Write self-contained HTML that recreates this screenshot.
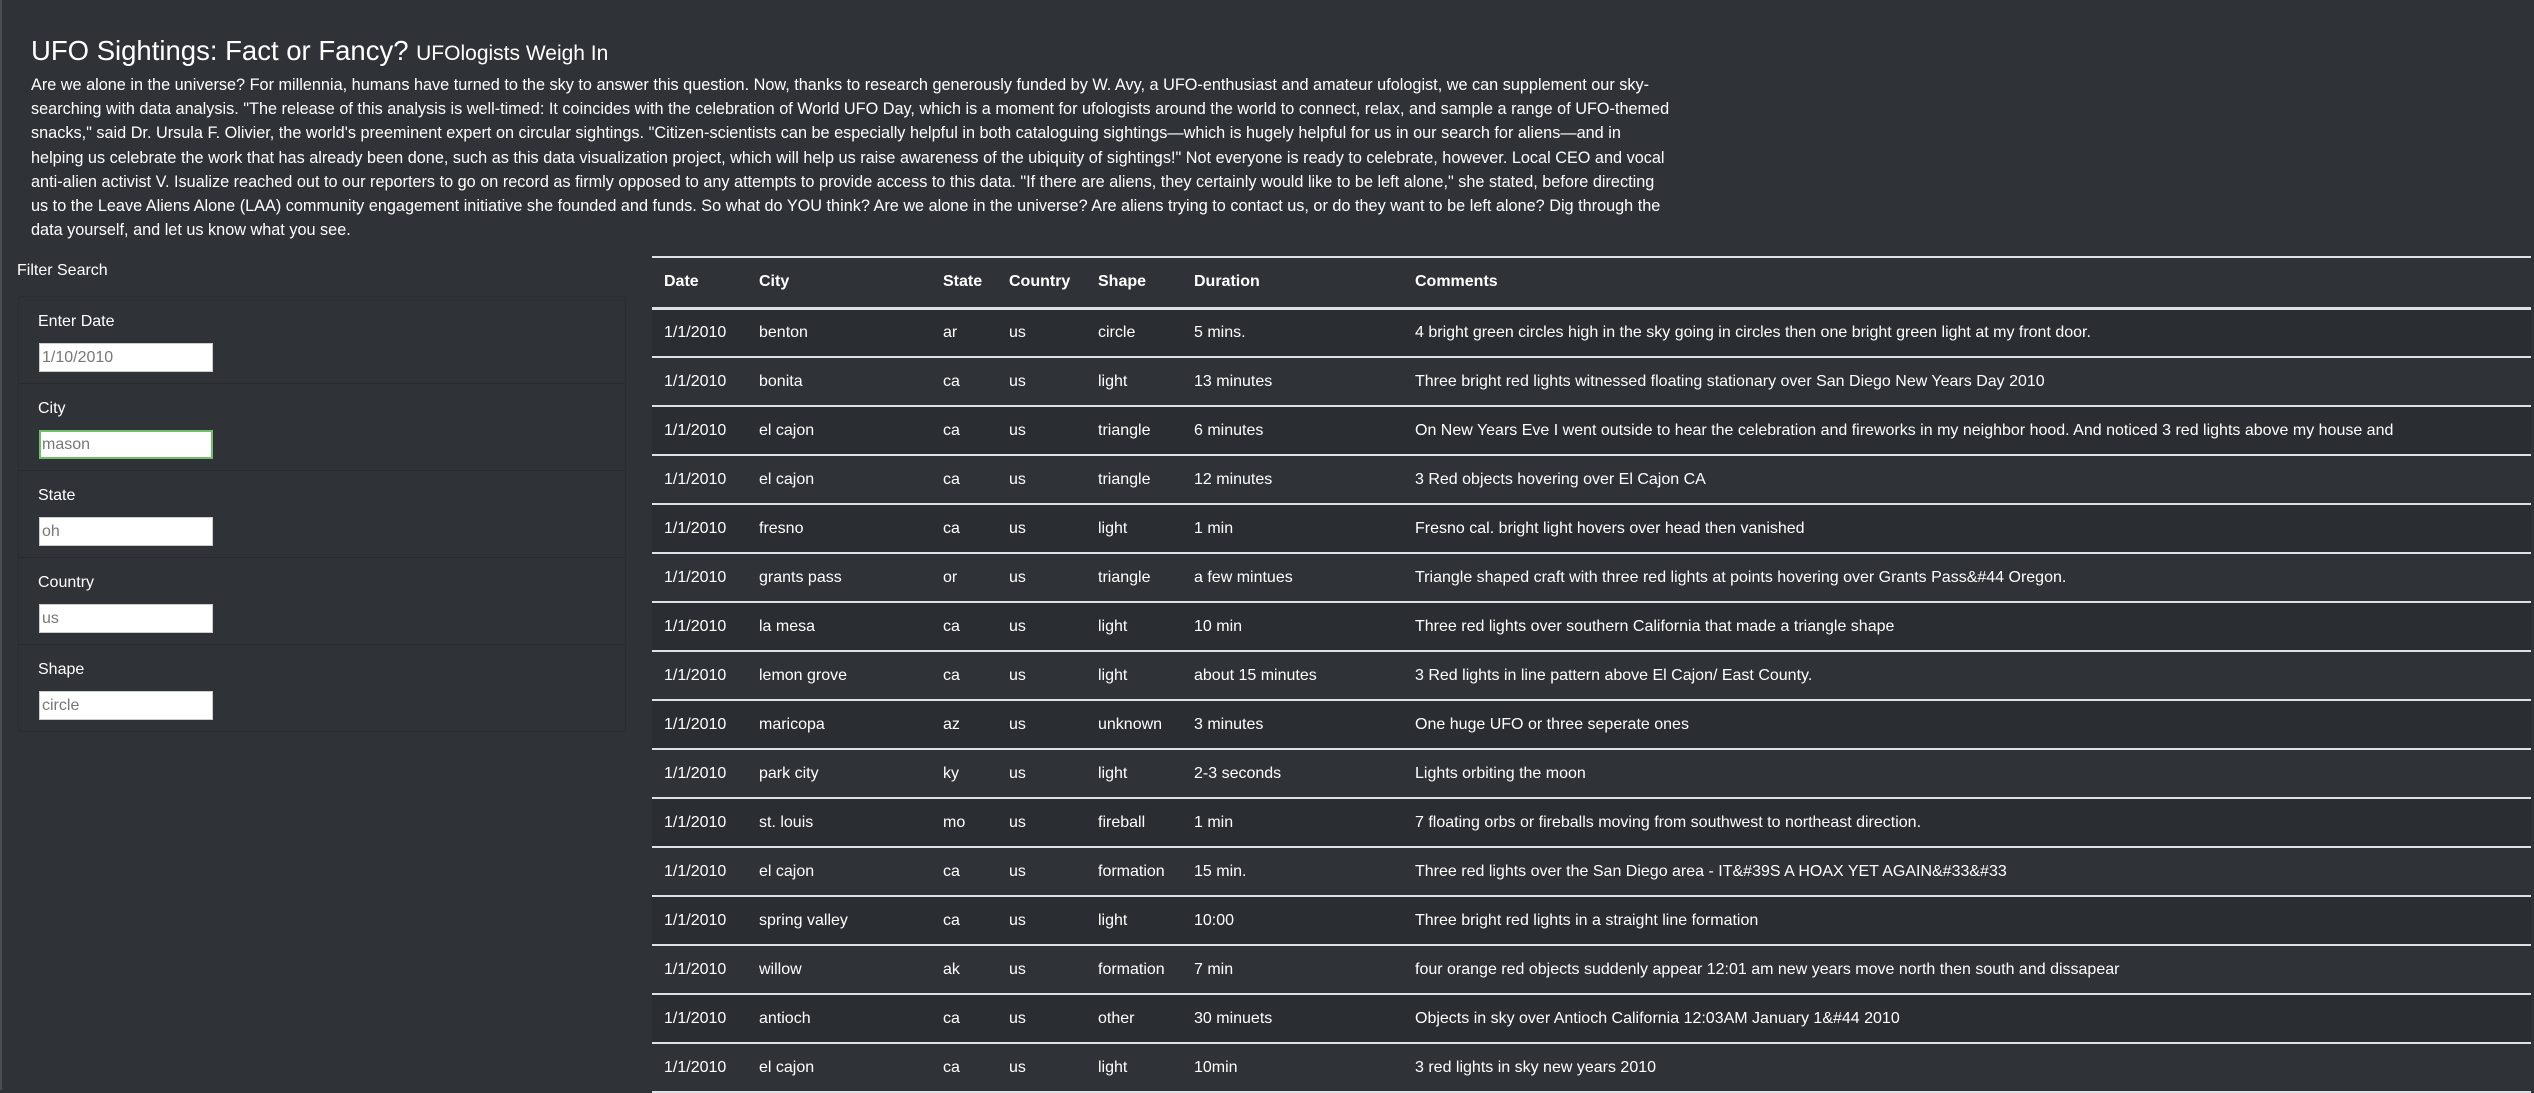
<!DOCTYPE html>
<html><head><meta charset="utf-8"><style>
*{box-sizing:border-box;margin:0;padding:0}
body{width:2534px;height:1090px;overflow:hidden;background:#2f3338;color:#fff;font-family:"Liberation Sans",Arial,sans-serif;position:relative;border-left:2px solid #4a4e53}
h1{position:absolute;left:29px;top:35px;font-size:27.5px;font-weight:500;white-space:nowrap}
h1 small{font-size:21px}
.p{position:absolute;left:29px;top:73px;font-size:16.25px;line-height:24.2px;white-space:nowrap}
.fs{position:absolute;left:15px;top:262px;font-size:16px}
.panel{position:absolute;left:16px;top:296px;width:608px;height:436px;border:1px solid #2a2d31;border-radius:4px}
.sec{height:87px;border-bottom:1px solid #272a2e;position:relative}
.sec:last-child{border-bottom:none}
.sec label{position:absolute;left:19px;top:16px;font-size:16px}
.sec .in{position:absolute;left:20px;top:46px;width:174px;height:29px;background:#fff;border:1px solid #ccc;color:#777;font-size:16px;line-height:27px;padding-left:2px}
.sec .g{border:2px solid #6fbf6a;line-height:25px;padding-left:1px}
table{position:absolute;left:650px;top:256px;width:1879px;border-collapse:collapse;font-size:16px;border-top:2px solid #dee2e6}
th{text-align:left;font-weight:bold;height:51px;border-bottom:3px solid #dee2e6;padding-left:12px}
td{height:49px;border-bottom:2px solid #dee2e6;padding-left:12px;white-space:nowrap}
tbody tr:nth-child(odd){background:#2a2d31}
</style></head><body>
<h1>UFO Sightings: Fact or Fancy? <small>UFOlogists Weigh In</small></h1>
<div class="p">Are we alone in the universe? For millennia, humans have turned to the sky to answer this question. Now, thanks to research generously funded by W. Avy, a UFO-enthusiast and amateur ufologist, we can supplement our sky-<br>searching with data analysis. "The release of this analysis is well-timed: It coincides with the celebration of World UFO Day, which is a moment for ufologists around the world to connect, relax, and sample a range of UFO-themed<br>snacks," said Dr. Ursula F. Olivier, the world's preeminent expert on circular sightings. "Citizen-scientists can be especially helpful in both cataloguing sightings—which is hugely helpful for us in our search for aliens—and in<br>helping us celebrate the work that has already been done, such as this data visualization project, which will help us raise awareness of the ubiquity of sightings!" Not everyone is ready to celebrate, however. Local CEO and vocal<br>anti-alien activist V. Isualize reached out to our reporters to go on record as firmly opposed to any attempts to provide access to this data. "If there are aliens, they certainly would like to be left alone," she stated, before directing<br>us to the Leave Aliens Alone (LAA) community engagement initiative she founded and funds. So what do YOU think? Are we alone in the universe? Are aliens trying to contact us, or do they want to be left alone? Dig through the<br>data yourself, and let us know what you see.</div>
<div class="fs">Filter Search</div>
<div class="panel">
<div class="sec"><label>Enter Date</label><div class="in">1/10/2010</div></div>
<div class="sec"><label>City</label><div class="in g">mason</div></div>
<div class="sec"><label>State</label><div class="in">oh</div></div>
<div class="sec"><label>Country</label><div class="in">us</div></div>
<div class="sec"><label>Shape</label><div class="in">circle</div></div>
</div>
<table>
<colgroup><col style="width:95px"><col style="width:184px"><col style="width:66px"><col style="width:89px"><col style="width:96px"><col style="width:221px"><col></colgroup>
<thead><tr><th>Date</th><th>City</th><th>State</th><th>Country</th><th>Shape</th><th>Duration</th><th>Comments</th></tr></thead>
<tbody>
<tr><td>1/1/2010</td><td>benton</td><td>ar</td><td>us</td><td>circle</td><td>5 mins.</td><td>4 bright green circles high in the sky going in circles then one bright green light at my front door.</td></tr>
<tr><td>1/1/2010</td><td>bonita</td><td>ca</td><td>us</td><td>light</td><td>13 minutes</td><td>Three bright red lights witnessed floating stationary over San Diego New Years Day 2010</td></tr>
<tr><td>1/1/2010</td><td>el cajon</td><td>ca</td><td>us</td><td>triangle</td><td>6 minutes</td><td>On New Years Eve I went outside to hear the celebration and fireworks in my neighbor hood. And noticed 3 red lights above my house and</td></tr>
<tr><td>1/1/2010</td><td>el cajon</td><td>ca</td><td>us</td><td>triangle</td><td>12 minutes</td><td>3 Red objects hovering over El Cajon CA</td></tr>
<tr><td>1/1/2010</td><td>fresno</td><td>ca</td><td>us</td><td>light</td><td>1 min</td><td>Fresno cal. bright light hovers over head then vanished</td></tr>
<tr><td>1/1/2010</td><td>grants pass</td><td>or</td><td>us</td><td>triangle</td><td>a few mintues</td><td>Triangle shaped craft with three red lights at points hovering over Grants Pass&amp;#44 Oregon.</td></tr>
<tr><td>1/1/2010</td><td>la mesa</td><td>ca</td><td>us</td><td>light</td><td>10 min</td><td>Three red lights over southern California that made a triangle shape</td></tr>
<tr><td>1/1/2010</td><td>lemon grove</td><td>ca</td><td>us</td><td>light</td><td>about 15 minutes</td><td>3 Red lights in line pattern above El Cajon/ East County.</td></tr>
<tr><td>1/1/2010</td><td>maricopa</td><td>az</td><td>us</td><td>unknown</td><td>3 minutes</td><td>One huge UFO or three seperate ones</td></tr>
<tr><td>1/1/2010</td><td>park city</td><td>ky</td><td>us</td><td>light</td><td>2-3 seconds</td><td>Lights orbiting the moon</td></tr>
<tr><td>1/1/2010</td><td>st. louis</td><td>mo</td><td>us</td><td>fireball</td><td>1 min</td><td>7 floating orbs or fireballs moving from southwest to northeast direction.</td></tr>
<tr><td>1/1/2010</td><td>el cajon</td><td>ca</td><td>us</td><td>formation</td><td>15 min.</td><td>Three red lights over the San Diego area - IT&amp;#39S A HOAX YET AGAIN&amp;#33&amp;#33</td></tr>
<tr><td>1/1/2010</td><td>spring valley</td><td>ca</td><td>us</td><td>light</td><td>10:00</td><td>Three bright red lights in a straight line formation</td></tr>
<tr><td>1/1/2010</td><td>willow</td><td>ak</td><td>us</td><td>formation</td><td>7 min</td><td>four orange red objects suddenly appear 12:01 am new years move north then south and dissapear</td></tr>
<tr><td>1/1/2010</td><td>antioch</td><td>ca</td><td>us</td><td>other</td><td>30 minuets</td><td>Objects in sky over Antioch California 12:03AM January 1&amp;#44 2010</td></tr>
<tr><td>1/1/2010</td><td>el cajon</td><td>ca</td><td>us</td><td>light</td><td>10min</td><td>3 red lights in sky new years 2010</td></tr>
</tbody></table>
</body></html>
